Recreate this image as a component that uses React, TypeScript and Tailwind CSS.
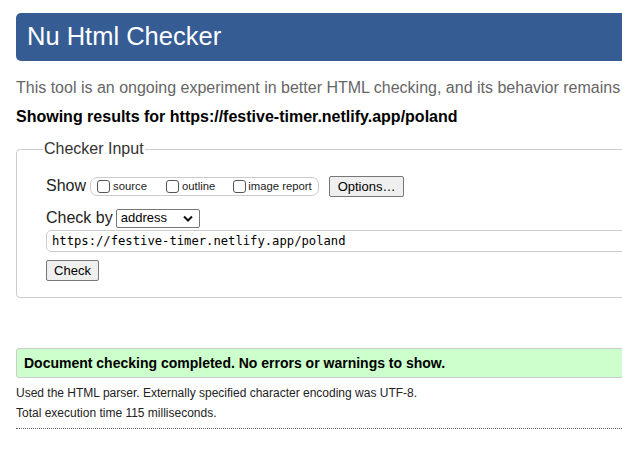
import React from "react";

export default function App() {
  return (
    <div className="w-[622px] h-[457px] overflow-hidden bg-white" style={{ fontFamily: '"Liberation Sans", Arial, sans-serif' }}>
      <div className="w-[700px] pl-4 pt-[13px]">
        <div className="h-12 bg-[#365c94] rounded-[5px] flex items-center pl-[11px]">
          <h1 className="text-[25.5px] text-white leading-none">Nu Html Checker</h1>
        </div>
        <p className="mt-[17px] text-[16px] leading-[20px] text-[#666] whitespace-nowrap">
          This tool is an ongoing experiment in better HTML checking, and its behavior remains
        </p>
        <p className="mt-[9px] text-[16px] leading-[20px] font-bold text-black whitespace-nowrap">
          Showing results for https://festive-timer.netlify.app/poland
        </p>
        <fieldset className="mt-[13px] border border-[#ccc] rounded-[4px] pl-[29px] pb-[16px] pt-[17px] min-w-0">
          <legend className="text-[16px] leading-[18px] text-[#333] px-px ml-[-3px] ">Checker Input</legend>
          <div className="flex items-center h-[22px]">
            <span className="text-[16px] text-[#222]">Show</span>
            <div className="ml-[4px] h-[19px] w-[229px] border border-[#ccc] rounded-[7px] flex items-center pl-[6px] text-[11.3px] text-[#222]">
              <span className="w-[13px] h-[13px] border border-[#555] rounded-[3px] bg-white" />
              <span className="ml-[3px]">source</span>
              <span className="ml-[19px] w-[13px] h-[13px] border border-[#555] rounded-[3px] bg-white" />
              <span className="ml-[3px]">outline</span>
              <span className="ml-[18px] w-[13px] h-[13px] border border-[#555] rounded-[3px] bg-white" />
              <span className="ml-[2px]">image report</span>
            </div>
            <button className="ml-[10px] h-[21px] w-[75px] border border-[#767676] rounded-[2px] bg-[#efefef] text-[13px] text-black leading-none">
              Options…
            </button>
          </div>
          <div className="flex items-center mt-[11px] h-[20px]">
            <span className="text-[16px] text-[#222]">Check by</span>
            <div className="ml-[3px] h-[19px] w-[84px] border border-[#767676] rounded-[2px] flex items-center justify-between pl-[4px] pr-[6px] text-[13px] text-black">
              <span>address</span>
              <svg width="10" height="7" viewBox="0 0 10 7"><path d="M1 1.5 L5 5.5 L9 1.5" fill="none" stroke="#111" strokeWidth="2" /></svg>
            </div>
          </div>
          <div className="mt-[2px] h-[22px] border border-[#ccc] rounded-[5px] flex items-center pl-[5px] text-[12.2px] text-black" style={{ fontFamily: '"DejaVu Sans Mono", monospace' }}>
            https://festive-timer.netlify.app/poland
          </div>
          <button className="mt-[8px] h-[21px] w-[53px] border border-[#767676] rounded-[2px] bg-[#efefef] text-[13px] text-black leading-none flex items-center justify-center">
            Check
          </button>
        </fieldset>
        <div className="mt-[50px] h-[30px] border border-[#ccc] rounded-l-[3px] bg-[#ccffcc] flex items-center pl-[7px]">
          <span className="text-[14px] font-bold text-black">Document checking completed. No errors or warnings to show.</span>
        </div>
        <p className="mt-[5px] text-[12px] leading-[20px] text-[#222]">Used the HTML parser. Externally specified character encoding was UTF-8.</p>
        <p className="text-[12px] leading-[20px] text-[#222]">Total execution time 115 milliseconds.</p>
        <div className="mt-[5px] border-t border-dotted border-[#666]" />
      </div>
    </div>
  );
}
